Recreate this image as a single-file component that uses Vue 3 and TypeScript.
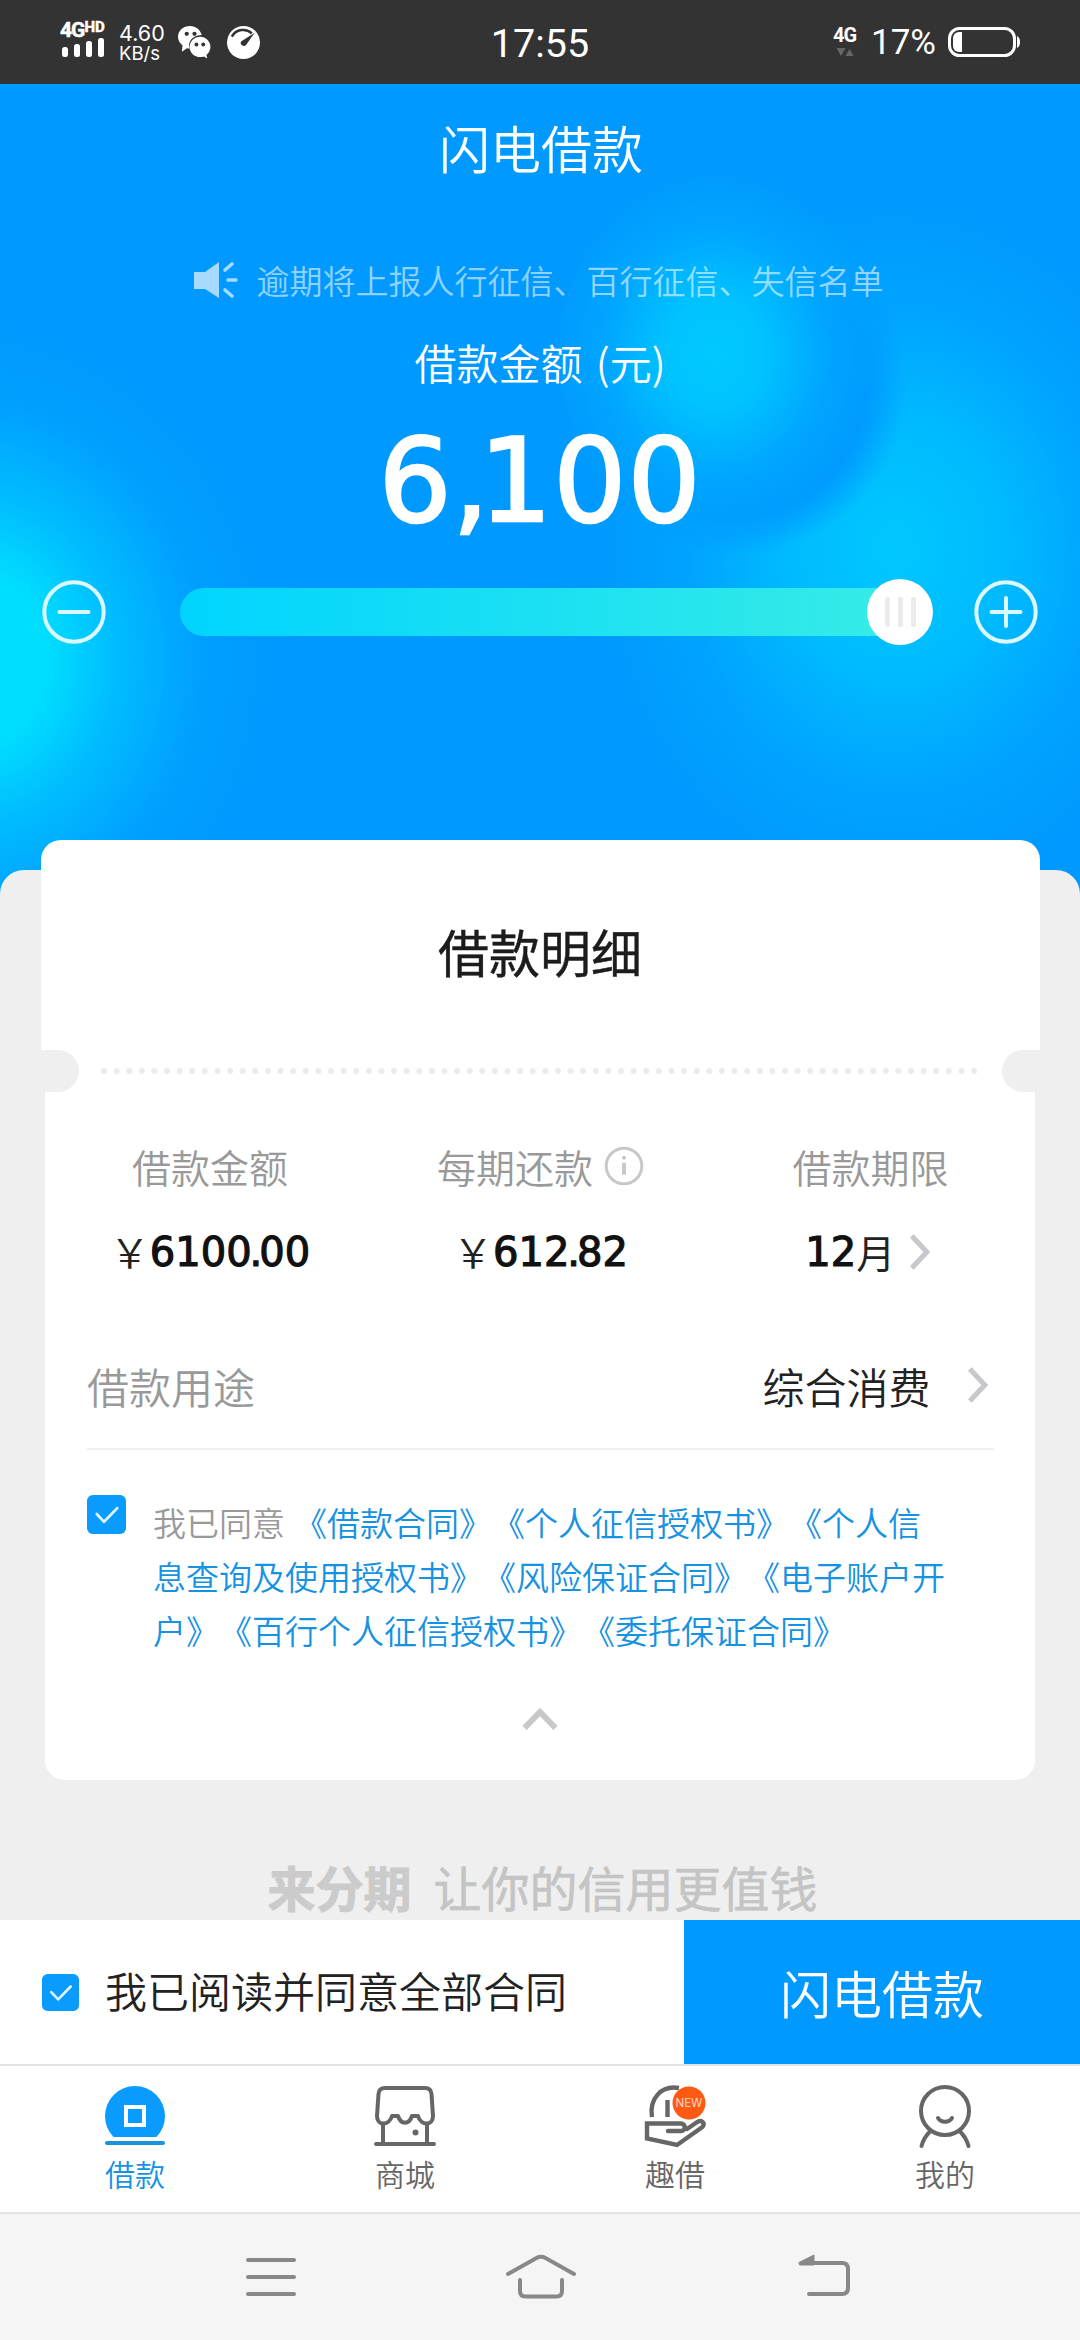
<script setup lang="ts">
import { ref } from 'vue'

interface Tab {
  key: string
  label: string
}

const amount = ref<string[]>(['6', ',', '100'])
const progress = ref(96)

const contracts: string[] = [
  '《借款合同》《个人征信授权书》《个人信',
  '息查询及使用授权书》《风险保证合同》《电子账户开',
  '户》《百行个人征信授权书》《委托保证合同》',
]

const tabs: Tab[] = [
  { key: 'loan', label: '借款' },
  { key: 'mall', label: '商城' },
  { key: 'fun', label: '趣借' },
  { key: 'mine', label: '我的' },
]
const active = ref('loan')
</script>

<template>
  <div class="screen" lang="zh-CN">
    <header class="status">
      <div class="signal">
        <div class="net"><b>4G</b><b class="hd">HD</b></div>
        <div class="bars"><i class="b1"></i><i class="b2"></i><i class="b3"></i><i class="b4"></i></div>
      </div>
      <div class="speed"><span>4.60</span><span class="unit">KB/s</span></div>
      <svg class="wechat" viewBox="0 0 34 34">
        <path fill="#fff" d="M12.500 0C5.500 0 0 4.800 0 11.200c0 3.500 1.700 6.600 4.600 8.700L4 26.500l5.200-3.700c1 .200 2 .300 3 .300A12 12 0 0 1 11.400 20C11.400 14 17 9.600 24.500 9.400 23 3.800 18.200 0 12.500 0Z" />
        <path fill="#fff" d="M22.800 11.200c-6 0-10.800 4.600-10.800 10.400S16.800 32 22.800 32c1.500 0 2.800-.200 4-.700l3.200 2.300-.6-4c2.500-2 4-4.700 4-8 0-5.800-4.700-10.400-10.600-10.400Z" />
        <g fill="#333"><circle cx="9" cy="8" r="2.200" /><circle cx="17" cy="8" r="2.200" /><circle cx="19" cy="19" r="2" /><circle cx="26" cy="19" r="2" /></g>
      </svg>
      <svg class="gauge" viewBox="0 0 34 34">
        <circle cx="17" cy="17" r="17" fill="#fff" />
        <path d="M5 11C9 3 20 2 25.500 7.500" fill="none" stroke="#333" stroke-width="2.600" />
        <path fill="#333" d="M28.500 7 19.800 19.200a3 3 0 0 1-5-3.600Z" />
      </svg>
      <div class="clock">17:55</div>
      <div class="right">
        <div class="net2">
          <b>4G</b>
          <svg viewBox="0 0 20 10"><path fill="#666" d="M0 0h10L5 9Zm10 9h9L14.500 1Z" /></svg>
        </div>
        <span class="pct">17%</span>
        <svg class="battery" viewBox="0 0 74 30">
          <rect x="1.500" y="1.500" width="65" height="27" rx="10" fill="none" stroke="#fff" stroke-width="3" />
          <path fill="#fff" d="M14 5v20h-3a6 6 0 0 1-6-6v-8a6 6 0 0 1 6-6Z" />
          <path fill="#fff" d="M69 9c2 1 3 3 3 6s-1 5-3 6Z" />
        </svg>
      </div>
    </header>

    <section class="hero">
      <h1>闪电借款</h1>
      <div class="notice">
        <svg viewBox="0 0 44 36">
          <path fill="#a6dbff" d="M0 10h11L25 0v36L11 27H0Z" />
          <path fill="none" stroke="#a6dbff" stroke-width="3.600" stroke-linecap="round" d="m31 8 7-6M34 18h8M31 28l7 6" />
        </svg>
        <span>逾期将上报人行征信、百行征信、失信名单</span>
      </div>
      <div class="caption">借款金额 (元)</div>
      <div class="amount">{{ amount[0] }}<span class="comma">{{ amount[1] }}</span>{{ amount[2] }}</div>
      <div class="slider">
        <svg class="round" viewBox="0 0 64 64"><circle cx="32" cy="32" r="29.700" /><path d="M17.500 32h29" /></svg>
        <div class="track">
          <div class="fill" :style="{ width: progress + '%' }"></div>
          <div class="thumb"><i></i><i></i><i></i></div>
        </div>
        <svg class="round" viewBox="0 0 64 64"><circle cx="32" cy="32" r="29.700" /><path d="M17.500 32h29M32 18v28" /></svg>
      </div>
    </section>

    <main class="sheet">
      <div class="card">
        <div class="card-title">借款明细</div>
        <div class="tear">
          <i class="notch left"></i>
          <svg viewBox="0 0 876 6"><path d="M3 3H873.500" stroke="#ebebeb" stroke-width="6" stroke-linecap="round" stroke-dasharray="0 12.610" /></svg>
          <i class="notch right"></i>
        </div>
        <div class="body">
          <div class="cols">
            <div class="col c1">
              <div class="label">借款金额</div>
              <div class="value"><span class="yen">￥</span><span class="num">6100<span class="dot">.</span>00</span></div>
            </div>
            <div class="col c2">
              <div class="label">每期还款
                <svg class="info" viewBox="0 0 40 40"><circle cx="20" cy="20" r="17.800" fill="none" stroke="#c8c8c8" stroke-width="3" /><circle cx="20" cy="11.800" r="2" fill="#c8c8c8" /><path d="M20 18.500v8.500" stroke="#c8c8c8" stroke-width="4" stroke-linecap="round" /></svg>
              </div>
              <div class="value"><span class="yen">￥</span><span class="num">612<span class="dot">.</span>82</span></div>
            </div>
            <div class="col c3">
              <div class="label">借款期限</div>
              <div class="value"><span class="num">12</span><span class="month">月</span>
                <svg class="chev" viewBox="0 0 24 40"><path d="m3 3 16 17L3 37" /></svg>
              </div>
            </div>
          </div>
          <div class="purpose">
            <span class="purpose-name">借款用途</span>
            <span class="purpose-value">综合消费</span>
            <svg class="chev" viewBox="0 0 24 40"><path d="m3 3 16 17L3 37" /></svg>
          </div>
          <div class="agree">
            <svg class="check big" viewBox="0 0 40 40"><rect width="40" height="40" rx="6" /><path d="m10 19.500 7.500 8L31 13.500" /></svg>
            <div class="terms">
              <div v-for="(line, i) in contracts" :key="i" class="line"><span v-if="i === 0" class="lead">我已同意</span>{{ line }}</div>
            </div>
          </div>
          <svg class="up" viewBox="0 0 36 24"><path d="m2.500 21 15.500-16 15.500 16" /></svg>
        </div>
      </div>
      <div class="slogan"><strong>来分期</strong><span>让你的信用更值钱</span></div>
    </main>

    <div class="action">
      <svg class="check" viewBox="0 0 40 40"><rect width="40" height="40" rx="6" /><path d="m10 19.500 7.500 8L31 13.500" /></svg>
      <span class="read">我已阅读并同意全部合同</span>
      <button type="button">闪电借款</button>
    </div>

    <nav class="tabs">
      <div v-for="tab in tabs" :key="tab.key" class="tab" :class="{ on: tab.key === active }">
        <svg v-if="tab.key === 'loan'" viewBox="0 0 64 64">
          <path fill="#0a9bff" d="M10.500 52a30 30 0 1 1 43 0Z" />
          <rect x="23" y="22" width="18" height="18" fill="none" stroke="#fff" stroke-width="4" />
          <path d="M4 58h56" stroke="#1b93dc" stroke-width="4" stroke-linecap="round" />
        </svg>
        <svg v-else-if="tab.key === 'mall'" viewBox="0 0 64 64" class="ln">
          <path d="M12 3h40q6 0 6.500 6L60 31c0 10-12 10-15 0h-6c-3 9-11 9-14 0h-6c-3 10-15 10-15 0L5.500 9Q6 3 12 3Z" />
          <path d="M10 39v20M54 39v20M3 59h58" />
          <circle cx="42.500" cy="47.500" r="3" class="solid" />
        </svg>
        <svg v-else-if="tab.key === 'fun'" viewBox="0 0 64 64" class="ln fun">
          <path d="M9 32C6 14 18 0 36 3M24.500 15v17" stroke-linecap="butt" />
          <path d="M25 46h13c5 0 5-7.500 0-7.500H4v15L34 60l25.500-18c3-4-1-8-6-4.500L44 44" stroke-linejoin="miter" />
          <circle cx="46" cy="18" r="16.500" class="badge" />
          <text x="46" y="22" text-anchor="middle">NEW</text>
        </svg>
        <svg v-else viewBox="0 0 64 64" class="ln">
          <circle cx="32" cy="26" r="24" />
          <path d="M25 33c3 5 11 5 14 0M17.500 46Q11 52 8.500 61M46.500 46Q53 52 55.500 61" />
        </svg>
        <span>{{ tab.label }}</span>
      </div>
    </nav>

    <footer class="sysnav">
      <svg viewBox="0 0 80 60"><path d="M17 13h46M17 30h46M17 47h46" /></svg>
      <svg viewBox="0 0 80 60"><path d="M7 27 35.500 11q4.500-2.400 9 0L73 27M19 33v11q0 5.500 5.500 5.500h31q5.500 0 5.500-5.500V33" /></svg>
      <svg viewBox="0 0 80 60"><path d="M18 16h37q6 0 6 6v19q0 6-6 6H22" /><path class="tip" d="M12 15.500 27 8v10H13Z" /></svg>
    </footer>
  </div>
</template>

<style>
body { background: #efefef; }
</style>

<style scoped>
* { box-sizing: border-box; }
.screen {
  width: 1080px; height: 2340px; display: flex; flex-direction: column; overflow: hidden;
  font-family: "Noto Sans CJK SC", sans-serif; font-weight: 350; color: #222;
  text-spacing-trim: space-all; background: #efefef;
}
svg { display: block; flex: none; overflow: visible; }

.status { position: relative; height: 84px; flex: none; background: #333; color: #fff; display: flex; padding-left: 60px; font-family: Roboto, sans-serif; font-weight: 400; }
.signal { width: 59px; padding-top: 22px; }
.net { display: flex; align-items: flex-start; height: 16px; font-size: 21px; line-height: 16px; letter-spacing: -1px; -webkit-text-stroke: .5px #fff; }
.hd { font-size: 15px; line-height: 11px; letter-spacing: 0; }
.bars { display: flex; align-items: flex-end; gap: 6px; height: 19px; padding-left: 2px; }
.bars i { width: 6px; border-radius: 2.500px; background: #fff; }
.b1 { height: 10px; } .b2 { height: 13px; } .b3 { height: 16px; } .b4 { height: 19px; }
.speed { width: 59px; padding-top: 21px; display: flex; flex-direction: column; font: 400 21.500px/24px Inter, sans-serif; }
.speed .unit { font-size: 18.500px; line-height: 17px; }
.wechat { width: 33px; height: 33px; margin-top: 26px; }
.gauge { width: 33px; height: 33px; margin: 26px 0 0 16px; }
.clock { position: absolute; left: 0; right: 0; top: 22px; text-align: center; font-size: 39.500px; line-height: 44px; }
.right { margin-left: auto; display: flex; padding-right: 58px; }
.net2 { width: 38px; padding-top: 27px; font-size: 20px; line-height: 16px; }
.net2 b { display: block; letter-spacing: -1px; }
.net2 svg { width: 19px; height: 9px; margin: 5px 0 0 3px; }
.pct { width: 77px; font-size: 35px; line-height: 40px; padding-top: 23px; }
.battery { width: 74px; height: 30px; margin-top: 27px; }

.hero {
  height: 816px; flex: none; display: flex; flex-direction: column; align-items: center; color: #fff;
  background:
    radial-gradient(ellipse 165px 185px at 715px 270px, rgba(0, 204, 255, .95), rgba(0, 202, 255, .85) 30%, rgba(0, 184, 255, .4) 68%, rgba(0, 160, 255, 0)),
    radial-gradient(circle 172px at 735px 300px, #0099ff 76%, rgba(0, 153, 255, 0)),
    radial-gradient(ellipse 300px 350px at 895px 465px, rgba(0, 202, 255, .95), rgba(0, 196, 255, .8) 35%, rgba(0, 178, 255, .4) 70%, rgba(0, 153, 255, 0)),
    radial-gradient(ellipse 310px 340px at -35px 575px, #00deff 26%, rgba(0, 205, 255, .7) 48%, rgba(0, 180, 255, .25) 76%, rgba(0, 153, 255, 0)),
    #0099ff;
}
h1 { margin: 27px 0 0; font-size: 51px; line-height: 72px; font-weight: 350; padding-left: 2px; }
.notice { display: flex; align-items: center; height: 48px; margin-top: 73px; font-size: 33px; line-height: 48px; color: rgba(255, 255, 255, .58); padding-right: 3px; }
.notice svg { width: 44px; height: 36px; margin-right: 19px; }
.caption { font-size: 42px; line-height: 60px; margin-top: 28px; white-space: pre; word-spacing: 4px; }
.amount { font-family: "DejaVu Sans", sans-serif; font-weight: 400; font-size: 115px; line-height: 120px; margin-top: 29px; letter-spacing: 1px; -webkit-text-stroke: 2.500px #fff; }
.amount .comma { letter-spacing: -10px; }
.slider { display: flex; width: 1080px; justify-content: space-between; align-items: center; padding: 0 42px; margin-top: 38px; height: 66px; }
.round { width: 64px; height: 64px; fill: none; stroke: #dcf8ff; stroke-width: 4; stroke-linecap: round; }
.track { position: relative; width: 752px; height: 48px; margin-left: 32px; display: flex; }
.fill { border-radius: 24px; background: linear-gradient(90deg, #00d4ff, #36ece6); }
.thumb { position: absolute; left: 687px; top: -9px; width: 66px; height: 66px; border-radius: 50%; background: #fff; display: flex; justify-content: center; align-items: center; gap: 8px; }
.thumb i { width: 5px; height: 30px; border-radius: 2px; background: #ebebeb; }

.sheet { position: relative; height: 1050px; margin-top: -30px; flex: none; background: #efefef; border-radius: 24px 24px 0 0; display: flex; flex-direction: column; align-items: center; }
.card { margin-top: -30px; width: 999px; display: flex; flex-direction: column; align-items: center; }
.card-title { width: 999px; height: 210px; background: #fff; border-radius: 20px 20px 0 0; text-align: center; font-size: 51px; font-weight: 400; line-height: 223px; color: #1c1c1c; -webkit-text-stroke: .4px #1c1c1c; }
.tear { width: 999px; height: 42px; background: #fff; display: flex; justify-content: space-between; align-items: center; }
.tear svg { width: 876px; height: 6px; margin-right: 2px; }
.notch { width: 38px; height: 42px; background: #efefef; }
.left { border-radius: 0 21px 21px 0; }
.right.notch { border-radius: 21px 0 0 21px; margin: 0; padding: 0; }
.body { width: 990px; height: 688px; background: #fff; border-radius: 0 0 20px 20px; display: flex; flex-direction: column; }
.cols { display: flex; height: 236px; padding-top: 46px; }
.col { display: flex; flex-direction: column; align-items: center; }
.c1 { width: 330px; } .c2 { width: 331px; } .c3 { width: 329px; }
.label { display: flex; align-items: center; height: 56px; font-size: 39px; line-height: 56px; color: #999; }
.info { width: 40px; height: 40px; margin-left: 11px; }
.value { display: flex; align-items: center; height: 60px; margin-top: 28px; font-size: 42px; line-height: 60px; }
.c3 .value { padding-right: 4px; }
.yen { font-size: 40px; margin-top: -2px; }
.num { font-family: "DejaVu Sans", sans-serif; font-weight: 400; font-size: 40px; color: #111; -webkit-text-stroke: 1.200px #111; }
.dot { margin: 0 -3px 0 -2px; }
.month { font-size: 39px; font-weight: 400; margin-top: -2px; }
.chev { width: 22.500px; height: 38px; fill: none; stroke: #c8c8cc; stroke-width: 5.500; }
.c3 .chev { margin-left: 14px; }
.purpose { display: flex; align-items: center; height: 122px; margin: 0 41px 0 42px; border-bottom: 2px solid #f0f0f0; font-size: 42px; padding-bottom: 6px; }
.purpose-name { color: #999; margin-right: auto; }
.purpose-value { margin-right: 36px; }
.purpose .chev { margin-right: 5px; }
.agree { display: flex; padding: 45px 0 0 42px; height: 213px; }
.check { width: 37px; height: 37px; fill: #0a9bff; }
.check path { fill: none; stroke: #dff6ff; stroke-width: 2.800; stroke-linecap: round; stroke-linejoin: round; }
.check.big { width: 39px; height: 39px; }
.terms { margin-left: 27px; font-size: 33px; line-height: 54px; color: #1692e2; white-space: nowrap; }
.lead { color: #999; margin-right: 9px; }
.up { width: 36px; height: 24px; margin: 44px 0 0 477px; fill: none; stroke: #c8c8cc; stroke-width: 6; }
.slogan { display: flex; margin-top: 71px; font-size: 48px; line-height: 70px; gap: 22px; color: #c4c4c4; padding-left: 5px; }
.slogan strong { font-weight: 700; color: #cbcbcb; -webkit-text-stroke: 1px #cbcbcb; }
.slogan span { font-weight: 400; -webkit-text-stroke: .6px #c4c4c4; }

.action { position: relative; height: 144px; flex: none; background: #fff; display: flex; align-items: center; padding-left: 42px; }
.read { font-size: 42px; margin: -5px 0 0 26px; }
.action button { margin-left: auto; width: 396px; height: 144px; border: 0; padding: 0; background: #0099ff; color: #fff; font: 350 51px/142px "Noto Sans CJK SC", sans-serif; }
.tabs { height: 150px; flex: none; background: #fff; border-top: 2px solid #e4e4e4; border-bottom: 2px solid #e4e4e4; display: flex; }
.tab { width: 270px; display: flex; flex-direction: column; align-items: center; padding-top: 19px; font-size: 30px; line-height: 44px; color: #666; }
.tab svg { width: 64px; height: 64px; margin-bottom: 2px; }
.tab.on { color: #1692e2; }
.ln { fill: none; stroke: #666; stroke-width: 4; stroke-linecap: round; stroke-linejoin: round; }
.ln .solid { fill: #666; stroke: none; }
.fun { stroke-width: 4.400; }
.badge { fill: #ff5a14; stroke: none; }
.fun text { font: 400 11.500px Inter, sans-serif; fill: #ffd9c4; stroke: none; }
.sysnav { flex: 1; background: #f5f5f5; display: flex; padding: 33px 0 0 231px; gap: 190px; }
.sysnav svg { width: 80px; height: 60px; fill: none; stroke: #888; stroke-width: 4; stroke-linecap: round; stroke-linejoin: round; }
.sysnav svg:last-child { margin-left: 16px; }
.sysnav .tip { fill: #888; stroke-width: 1; }
</style>
